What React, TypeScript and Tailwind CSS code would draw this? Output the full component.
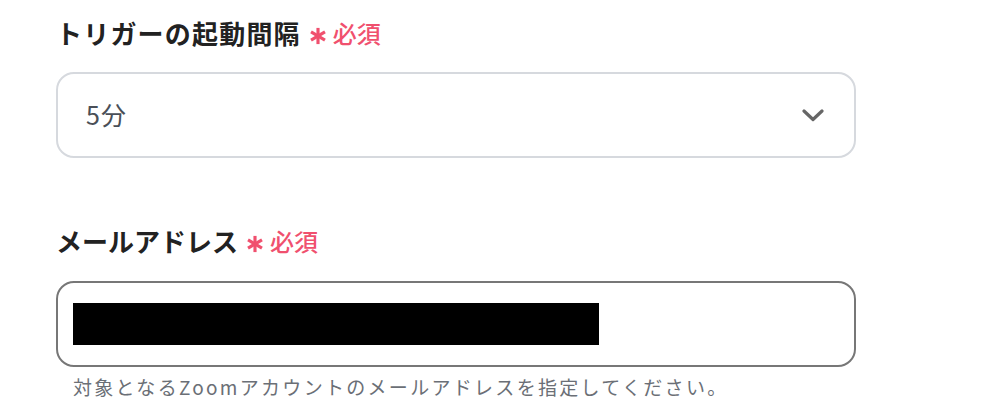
const font = { fontFamily: '"Noto Sans CJK JP", "Noto Sans", sans-serif' };

function RequiredMark() {
  return (
    <span className="ml-[8px] flex items-center gap-[6px] text-[#f0506e]">
      <svg width="18" height="18" viewBox="0 0 16 16" className="mt-[5px]">
        <g stroke="currentColor" strokeWidth="2.8" strokeLinecap="butt">
          <line x1="8" y1="0.8" x2="8" y2="15.2" />
          <line x1="1.8" y1="4.4" x2="14.2" y2="11.6" />
          <line x1="1.8" y1="11.6" x2="14.2" y2="4.4" />
        </g>
      </svg>
      <span className="text-[24px] font-medium leading-none">必須</span>
    </span>
  );
}

export default function App() {
  return (
    <div className="min-h-[418px] w-[994px] bg-white pl-[56px] pt-[13px]" style={font}>
      <div className="w-[800px]">
        <div className="flex h-[40px] items-center">
          <span className="text-[26px] font-bold leading-none tracking-[1.2px] text-[#222]">トリガーの起動間隔</span>
          <RequiredMark />
        </div>
        <div className="mt-[19px] flex h-[86px] items-center justify-between rounded-[18px] border-2 border-[#d6d9de] pl-[28px] pr-[30px]">
          <span className="text-[25px] tracking-[1px] text-[#4a4f57]">5分</span>
          <svg width="22" height="13" viewBox="0 0 22 13" fill="none">
            <path d="M2 2l9 8.5L20 2" stroke="#666" strokeWidth="3.2" strokeLinecap="round" strokeLinejoin="round" />
          </svg>
        </div>

        <div className="mt-[63px] flex h-[40px] items-center">
          <span className="text-[26px] font-bold leading-none text-[#222]">メールアドレス</span>
          <RequiredMark />
        </div>
        <div className="mt-[20px] flex h-[86px] items-center rounded-[18px] border-2 border-[#777] pl-[15px]">
          <div className="h-[42px] w-[526px] bg-black" />
        </div>
        <p className="mt-[8px] pl-[17px] text-[19px] leading-[24px] tracking-[2.3px] text-[#6b6f76]">
          対象となるZoomアカウントのメールアドレスを指定してください。
        </p>
      </div>
    </div>
  );
}
